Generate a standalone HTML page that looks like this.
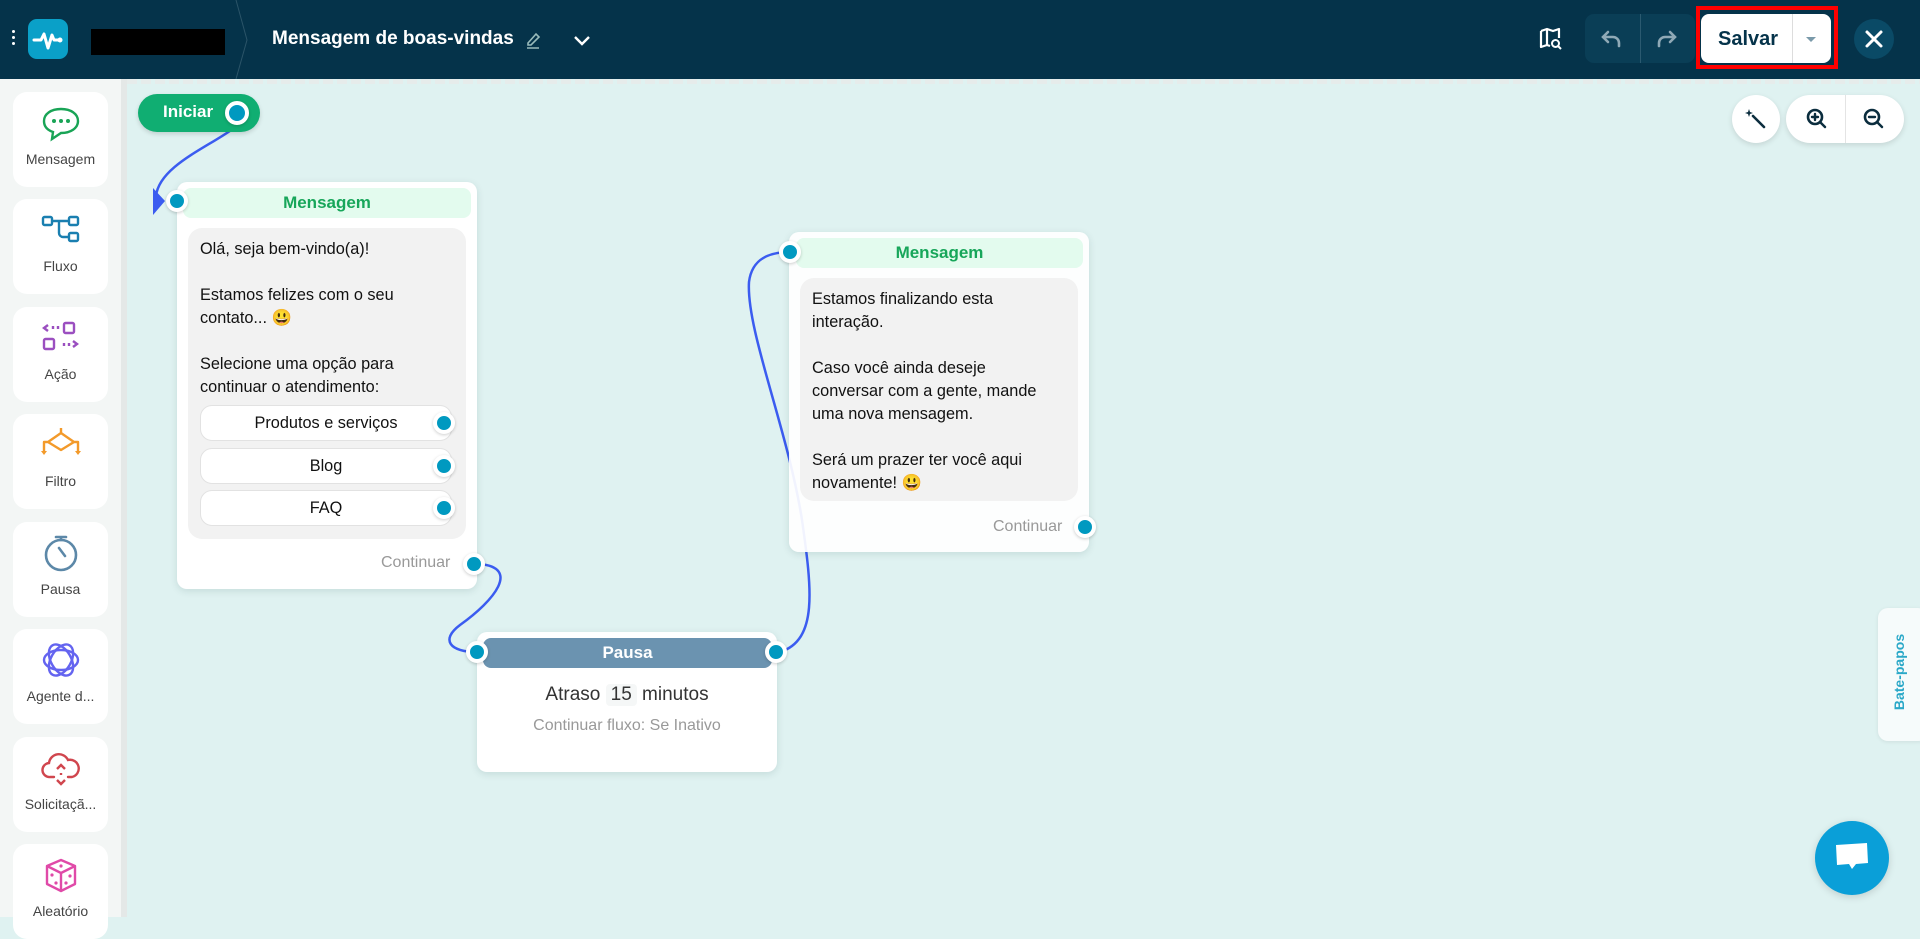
<!DOCTYPE html>
<html><head><meta charset="utf-8"><style>
*{box-sizing:border-box;margin:0;padding:0}
body{width:1920px;height:917px;overflow:hidden;background:#dff2f1;font-family:"Liberation Sans",sans-serif;position:relative}
.abs{position:absolute}
#hdr{left:0;top:0;width:1920px;height:79px;background:#05334a}
#side{left:0;top:79px;width:121px;height:838px;background:#f3f6f5}
#sbar{left:121px;top:79px;width:6px;height:838px;background:#e4e8e7}
.card{position:absolute;left:13px;width:95px;height:95px;background:#fff;border-radius:14px;text-align:center}
.card svg{position:absolute;left:27px;top:12px}
.card span{position:absolute;left:0;right:0;top:59px;font-size:14px;color:#444;white-space:nowrap}
.node{position:absolute;background:#fff;border-radius:10px;box-shadow:0 2px 8px rgba(0,60,60,.12)}
.nh{position:absolute;border-radius:8px;text-align:center;font-weight:bold;font-size:17px;line-height:30px}
.bub{position:absolute;background:#f2f2f2;border-radius:14px;font-size:16.3px;line-height:23px;color:#111;padding:10px 12px}
.port{position:absolute;width:22px;height:22px;border-radius:50%;background:#0099c0;border:4px solid #fff;box-shadow:0 1px 3px rgba(0,0,0,.2)}
.opt{position:absolute;left:12px;width:252px;height:36px;background:#fff;border:1px solid #e2e2e2;border-radius:12px;text-align:center;line-height:34px;font-size:16.3px}
.opt .port{left:232px;top:6px}
.cont{position:absolute;font-size:16px;color:#999}
</style></head><body>
<div id="hdr" class="abs">
  <div class="abs" style="left:12px;top:30px;width:3px;height:3px;background:#fff;border-radius:2px;box-shadow:0 6px 0 #fff,0 12px 0 #fff"></div>
  <div class="abs" style="left:28px;top:19px;width:40px;height:40px;background:#0aa0c8;border-radius:9px">
    <svg width="40" height="40" viewBox="0 0 40 40"><path d="M6 21h7l3-6 4 14 4-13 2 5h6" fill="none" stroke="#fff" stroke-width="3" stroke-linejoin="round" stroke-linecap="round"/><circle cx="32" cy="21" r="2.5" fill="#fff"/></svg>
  </div>
  <div class="abs" style="left:91px;top:29px;width:134px;height:26px;background:#000"></div>
  <svg class="abs" style="left:234px;top:0" width="20" height="79"><path d="M2 0 L13 40 L2 79" fill="none" stroke="#2b5468" stroke-width="1"/></svg>
  <div class="abs" style="left:272px;top:28px;font-size:19px;font-weight:bold;color:#fff">Mensagem de boas-vindas</div>
  <svg class="abs" style="left:523px;top:29px" width="20" height="20"><path d="M5 14 L13 5 L16 8 L8 16 L5 16Z" fill="none" stroke="#9bb" stroke-width="1.6"/><path d="M4 19h12" stroke="#9bb" stroke-width="1.5"/></svg>
  <svg class="abs" style="left:571px;top:29px" width="22" height="22"><path d="M4 8 L11 15 L18 8" fill="none" stroke="#fff" stroke-width="2.4"/></svg>
  <svg class="abs" style="left:1538px;top:26px" width="26" height="26"><path d="M3 5 L9 3 L15 5 L21 3 V12 M3 5 V21 L9 19 L12 20 M9 3 V19" fill="none" stroke="#fff" stroke-width="2.2" stroke-linejoin="round"/><circle cx="17.5" cy="17.5" r="3.5" fill="none" stroke="#fff" stroke-width="2"/><path d="M20 20l3 3" stroke="#fff" stroke-width="2"/></svg>
  <div class="abs" style="left:1585px;top:14px;width:110px;height:49px;background:#0a3e56;border-radius:9px"></div>
  <div class="abs" style="left:1640px;top:14px;width:1px;height:49px;background:#2b5a70"></div>
  <svg class="abs" style="left:1599px;top:27px" width="24" height="24"><path d="M9 5 L4 10 L9 15 M4 10 H14 A6 6 0 0 1 20 16 V19" fill="none" stroke="#8fa9b6" stroke-width="2.6" stroke-linecap="round"/></svg>
  <svg class="abs" style="left:1655px;top:27px" width="24" height="24"><path d="M15 5 L20 10 L15 15 M20 10 H10 A6 6 0 0 0 4 16 V19" fill="none" stroke="#8fa9b6" stroke-width="2.6" stroke-linecap="round"/></svg>
  <div class="abs" style="left:1696px;top:6px;width:142px;height:63px;border:4px solid #f00"></div>
  <div class="abs" style="left:1701px;top:14px;width:130px;height:49px;background:#fff;border-radius:8px"></div>
  <div class="abs" style="left:1792px;top:14px;width:1px;height:49px;background:#ddd"></div>
  <div class="abs" style="left:1718px;top:28px;font-size:20px;color:#05334a;font-weight:bold">Salvar</div>
  <div class="abs" style="left:1806px;top:37px;border-left:5px solid transparent;border-right:5px solid transparent;border-top:5px solid #7a9aaa"></div>
  <div class="abs" style="left:1854px;top:19px;width:40px;height:40px;border-radius:50%;background:#0a4a66"></div>
  <svg class="abs" style="left:1864px;top:29px" width="20" height="20"><path d="M3 3 L17 17 M17 3 L3 17" stroke="#fff" stroke-width="3" stroke-linecap="round"/></svg>
</div>
<div class="abs" style="left:127px;top:79px;width:1793px;height:5px;background:repeating-linear-gradient(90deg,#e6eceb 0 10px,#dff2f1 10px 14px)"></div>
<div id="side" class="abs"></div>
<div id="sbar" class="abs"></div>

<div class="card" style="top:92px"><svg width="42" height="40" viewBox="0 0 42 40"><path d="M21 5 C31 5 38 10 38 17 C38 24 31 29 21 29 L12 35 L13 28 C7 26 4 22 4 17 C4 10 11 5 21 5Z" fill="none" stroke="#19a456" stroke-width="2.4"/><circle cx="14" cy="17" r="2" fill="#19a456"/><circle cx="21" cy="17" r="2" fill="#19a456"/><circle cx="28" cy="17" r="2" fill="#19a456"/></svg><span>Mensagem</span></div>
<div class="card" style="top:199px"><svg width="42" height="40" viewBox="0 0 42 40"><rect x="3" y="6" width="9" height="8" rx="1.5" fill="none" stroke="#1a7fb0" stroke-width="2.4"/><rect x="29" y="6" width="9" height="8" rx="1.5" fill="none" stroke="#1a7fb0" stroke-width="2.4"/><rect x="29" y="22" width="9" height="8" rx="1.5" fill="none" stroke="#1a7fb0" stroke-width="2.4"/><path d="M12 10 H29 M19 10 V22 A4 4 0 0 0 23 26 H29" fill="none" stroke="#1a7fb0" stroke-width="2.4"/></svg><span>Fluxo</span></div>
<div class="card" style="top:307px"><svg width="42" height="40" viewBox="0 0 42 40"><path d="M8 6 L4 9 L8 12" fill="none" stroke="#9b4fc0" stroke-width="2.4"/><path d="M13 7v3M18 7v3M24 24v3M29 24v3" stroke="#9b4fc0" stroke-width="2.4"/><rect x="24" y="4" width="10" height="10" rx="1.5" fill="none" stroke="#9b4fc0" stroke-width="2.4"/><rect x="4" y="20" width="10" height="10" rx="1.5" fill="none" stroke="#9b4fc0" stroke-width="2.4"/><path d="M33 22 L37 25 L33 28" fill="none" stroke="#9b4fc0" stroke-width="2.4"/></svg><span>Ação</span></div>
<div class="card" style="top:414px"><svg width="42" height="40" viewBox="0 0 42 40"><path d="M21 2 V7 M21 7 L8 16 L21 24 L34 16 Z M8 16 H4 V26 M34 16 H38 V26" fill="none" stroke="#f39a2a" stroke-width="2.4" stroke-linejoin="round"/><path d="M1 25 h6 l-3 4z M35 25 h6 l-3 4z" fill="#f39a2a"/></svg><span>Filtro</span></div>
<div class="card" style="top:522px"><svg width="42" height="40" viewBox="0 0 42 40"><circle cx="21" cy="21" r="15" fill="none" stroke="#5c88a8" stroke-width="2.6"/><path d="M16 3h10M21 3v3M19 14 L25 22" stroke="#5c88a8" stroke-width="2.6" stroke-linecap="round"/></svg><span>Pausa</span></div>
<div class="card" style="top:629px"><svg width="42" height="40" viewBox="0 0 42 40"><g fill="none" stroke="#6464f0" stroke-width="2.4"><ellipse cx="21" cy="19" rx="17" ry="10"/><ellipse cx="21" cy="19" rx="17" ry="10" transform="rotate(60 21 19)"/><ellipse cx="21" cy="19" rx="17" ry="10" transform="rotate(120 21 19)"/></g></svg><span>Agente d...</span></div>
<div class="card" style="top:737px"><svg width="42" height="40" viewBox="0 0 42 40"><path d="M14 28 H10 A7 7 0 0 1 9 14 A10 10 0 0 1 28 11 A8 8 0 0 1 32 28 H28" fill="none" stroke="#d0464e" stroke-width="2.4" stroke-linecap="round"/><path d="M17 20 L21 16 L25 20 M17 31 L21 35 L25 31 M21 24v2" fill="none" stroke="#d0464e" stroke-width="2.4"/></svg><span>Solicitaçã...</span></div>
<div class="card" style="top:844px"><svg width="42" height="40" viewBox="0 0 42 40"><path d="M21 4 L35 10 V28 L21 35 L7 28 V10 Z M7 10 L21 17 L35 10 M21 17 V35" fill="none" stroke="#e04aa8" stroke-width="2.4" stroke-linejoin="round"/><circle cx="21" cy="10" r="1.6" fill="#e04aa8"/><circle cx="12" cy="19" r="1.6" fill="#e04aa8"/><circle cx="16" cy="27" r="1.6" fill="#e04aa8"/><circle cx="30" cy="20" r="1.6" fill="#e04aa8"/><circle cx="26" cy="27" r="1.6" fill="#e04aa8"/></svg><span>Aleatório</span></div>

<svg class="abs" style="left:0;top:0" width="1920" height="917">
  <path d="M245 117 C 230 140, 160 160, 156 196" fill="none" stroke="#3b5cf0" stroke-width="2.5"/>
  <path d="M153 188 L165 201 L153 215 Z" fill="#3b5cf0"/>
  <path d="M480 564 C 520 568, 495 600, 460 625 C 440 640, 450 652, 477 652" fill="none" stroke="#3b5cf0" stroke-width="2.5"/>
  <path d="M780 652 C 818 640, 812 590, 802 520 C 788 430, 746 330, 749 282 C 752 258, 770 252, 790 252" fill="none" stroke="#3b5cf0" stroke-width="2.5"/>
</svg>

<div class="abs" style="left:138px;top:94px;width:122px;height:38px;background:#10ae72;border-radius:19px;box-shadow:0 2px 5px rgba(0,0,0,.15)"></div>
<div class="abs" style="left:163px;top:102px;font-size:17px;font-weight:bold;color:#fff">Iniciar</div>
<div class="port" style="left:225px;top:101px;width:24px;height:24px"></div>

<div class="node" style="left:177px;top:182px;width:300px;height:407px">
  <div class="nh" style="left:6px;top:6px;width:288px;height:30px;background:#e3fbee;color:#17a65a">Mensagem</div>
  <div class="bub" style="left:11px;top:46px;width:278px;height:311px">Olá, seja bem-vindo(a)!<br><br>Estamos felizes com o seu contato... 😃<br><br>Selecione uma opção para continuar o atendimento:
    <div class="opt" style="top:177px">Produtos e serviços<div class="port"></div></div>
    <div class="opt" style="top:220px">Blog<div class="port"></div></div>
    <div class="opt" style="top:262px">FAQ<div class="port"></div></div>
  </div>
  <div class="cont" style="left:204px;top:372px">Continuar</div>
</div>
<div class="port" style="left:166px;top:190px"></div>
<div class="port" style="left:463px;top:553px"></div>

<div class="node" style="left:789px;top:232px;width:300px;height:320px;background:rgba(255,255,255,.93)">
  <div class="nh" style="left:7px;top:6px;width:287px;height:30px;background:#e3fbee;color:#17a65a">Mensagem</div>
  <div class="bub" style="left:11px;top:46px;width:278px;height:223px;padding-right:20px">Estamos finalizando esta interação.<br><br>Caso você ainda deseje conversar com a gente, mande uma nova mensagem.<br><br>Será um prazer ter você aqui novamente! 😃</div>
  <div class="cont" style="left:204px;top:286px">Continuar</div>
</div>
<div class="port" style="left:779px;top:241px"></div>
<div class="port" style="left:1074px;top:516px"></div>

<div class="node" style="left:477px;top:632px;width:300px;height:140px">
  <div class="nh" style="left:6px;top:6px;width:289px;height:30px;background:#6b93b0;color:#fff">Pausa</div>
  <div class="abs" style="left:0;right:0;top:52px;text-align:center;font-size:19px;color:#333">Atraso <span style="display:inline-block;background:#f5f7f7;padding:0 5px;border-radius:4px">15</span> minutos</div>
  <div class="abs" style="left:0;right:0;top:85px;text-align:center;font-size:16px;color:#999">Continuar fluxo: Se Inativo</div>
</div>
<div class="port" style="left:466px;top:641px"></div>
<div class="port" style="left:765px;top:641px"></div>

<div class="abs" style="left:1732px;top:95px;width:48px;height:48px;border-radius:50%;background:#fff;box-shadow:0 2px 6px rgba(0,0,0,.12)"></div>
<svg class="abs" style="left:1744px;top:107px" width="24" height="24"><path d="M9 9 L20 20" stroke="#0b2d3e" stroke-width="2.6" stroke-linecap="round"/><path d="M5 2 L6 5 L9 6 L6 7 L5 10 L4 7 L1 6 L4 5Z" fill="#0b2d3e"/></svg>
<div class="abs" style="left:1786px;top:95px;width:118px;height:48px;border-radius:24px;background:#fff;box-shadow:0 2px 6px rgba(0,0,0,.12)"></div>
<div class="abs" style="left:1845px;top:95px;width:1px;height:48px;background:#e4e4e4"></div>
<svg class="abs" style="left:1805px;top:107px" width="24" height="24"><circle cx="10" cy="10" r="7" fill="none" stroke="#0b2d3e" stroke-width="2.6"/><path d="M15 15 L20 20 M7 10h6M10 7v6" stroke="#0b2d3e" stroke-width="2.4" stroke-linecap="round"/></svg>
<svg class="abs" style="left:1862px;top:107px" width="24" height="24"><circle cx="10" cy="10" r="7" fill="none" stroke="#0b2d3e" stroke-width="2.6"/><path d="M15 15 L20 20 M7 10h6" stroke="#0b2d3e" stroke-width="2.4" stroke-linecap="round"/></svg>

<div class="abs" style="left:1878px;top:608px;width:50px;height:133px;background:#f6fbfb;border-radius:10px;box-shadow:0 1px 4px rgba(0,0,0,.08)"></div>
<div class="abs" style="left:1846px;top:662px;width:110px;height:20px;transform:rotate(-90deg);text-align:center;font-size:14px;font-weight:bold;color:#2aa8c8">Bate-papos</div>

<div class="abs" style="left:1815px;top:821px;width:74px;height:74px;border-radius:50%;background:#0a9fd8;box-shadow:0 2px 8px rgba(0,0,0,.15)"></div>
<svg class="abs" style="left:1832px;top:841px" width="40" height="34"><path d="M4 4 L35 2 L36 22 L24 23 L20 28 L17 23 L5 24 Z" fill="#fff"/></svg>
</body></html>
